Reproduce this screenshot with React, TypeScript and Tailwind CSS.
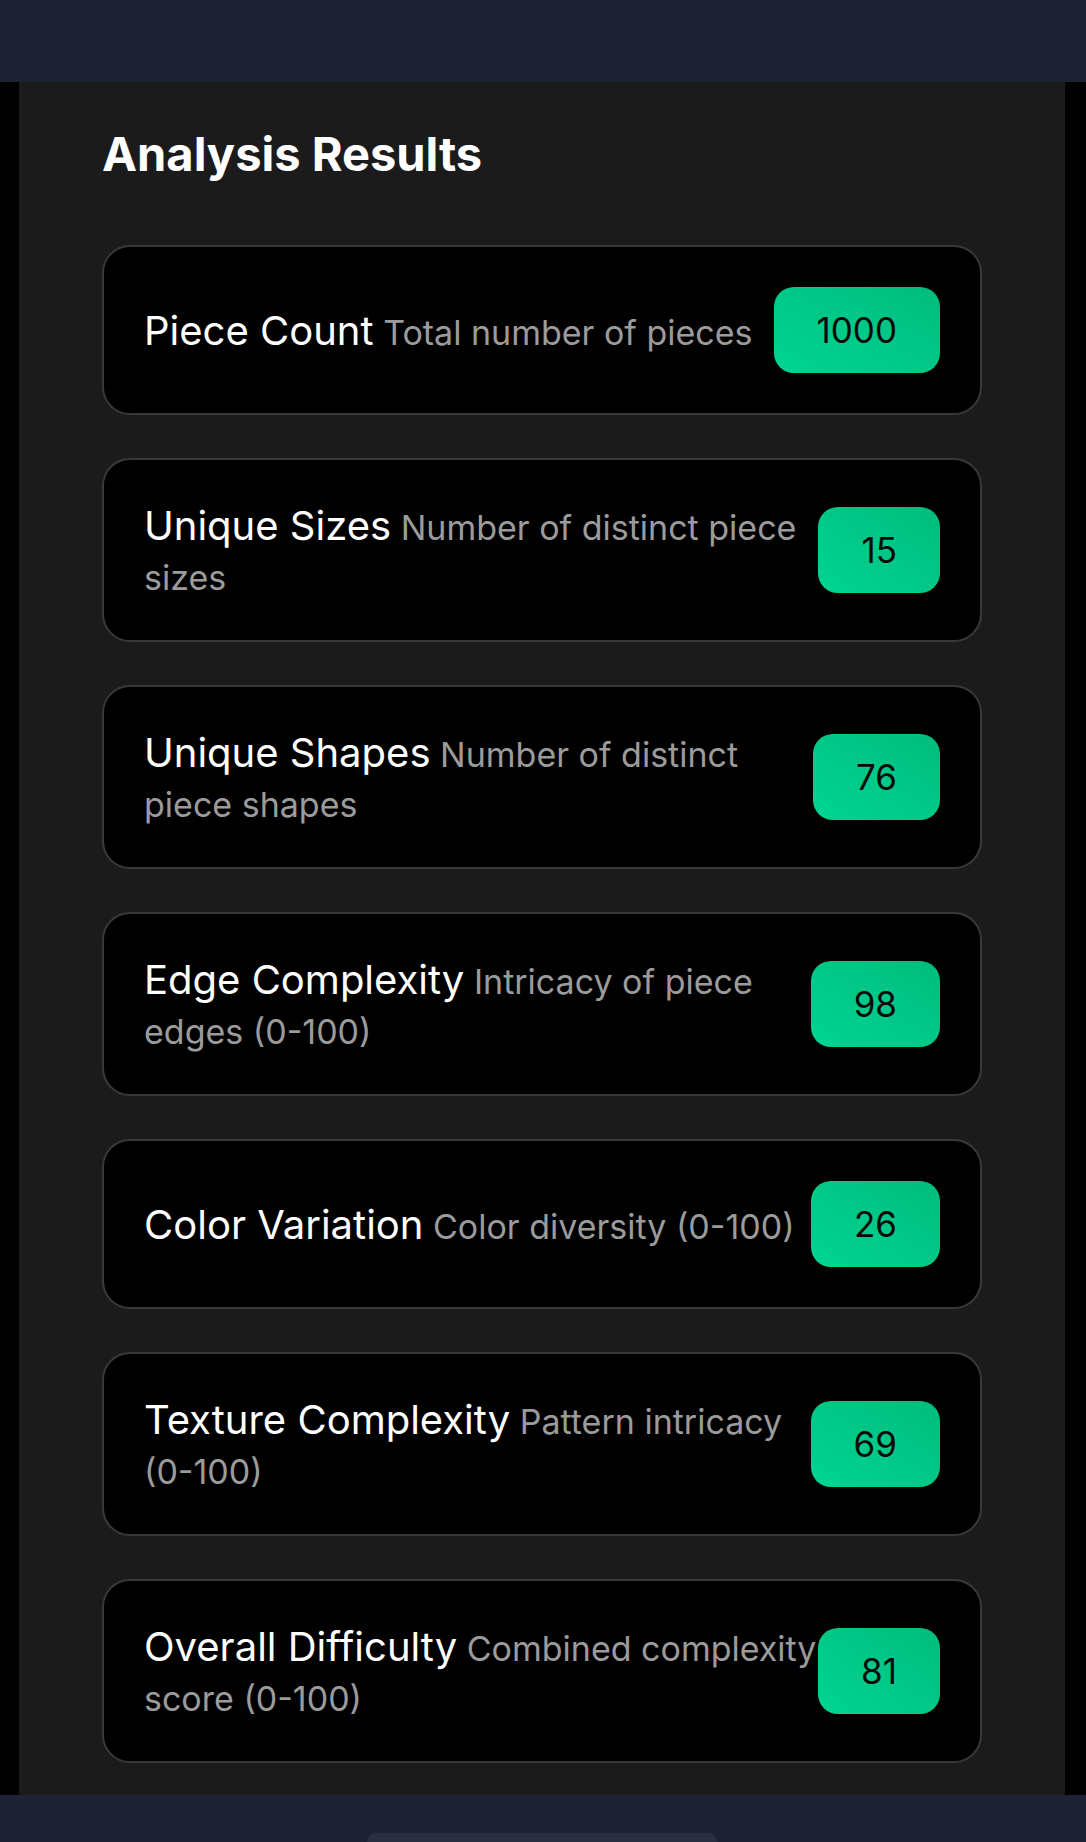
import React from 'react';

type Metric = {
  label: string;
  desc: string;
  value: number;
};

const metrics: Metric[] = [
  { label: 'Piece Count', desc: 'Total number of pieces', value: 1000 },
  { label: 'Unique Sizes', desc: 'Number of distinct piece sizes', value: 15 },
  { label: 'Unique Shapes', desc: 'Number of distinct piece shapes', value: 76 },
  { label: 'Edge Complexity', desc: 'Intricacy of piece edges (0-100)', value: 98 },
  { label: 'Color Variation', desc: 'Color diversity (0-100)', value: 26 },
  { label: 'Texture Complexity', desc: 'Pattern intricacy (0-100)', value: 69 },
  { label: 'Overall Difficulty', desc: 'Combined complexity score (0-100)', value: 81 },
];

const MetricCard = ({ label, desc, value }: Metric) => (
  <div className="flex items-center justify-between rounded-[28px] border-2 border-[#393939] bg-black p-[40px]">
    <p className="-mb-[3px] min-w-0 flex-1 pt-[3px] text-[34px] leading-[50px] text-[#9b9b9b]">
      <span className="text-[40px] leading-[46px] text-white">{label}</span> {desc}
    </p>
    <div className="shrink-0 rounded-[20px] bg-gradient-to-tr from-emerald-400 to-emerald-500 px-[43px] py-[18px] text-[35px] leading-[50px] text-[#0a0a0a]">
      {value}
    </div>
  </div>
);

export default function App() {
  return (
    <div className="w-full bg-black font-['Inter','Liberation_Sans',sans-serif]">
      {/* top app bar */}
      <div className="h-[82px] bg-[#1e2333]" />

      <div className="pl-[19px] pr-[21px]">
        <div className="bg-[#1b1b1b] px-[83px] pt-[37px] pb-[32px]">
          <h2 className="mb-[56px] text-[47px] font-bold leading-[70px] text-white">Analysis Results</h2>
          <div className="flex flex-col gap-[43px]">
            {metrics.map((m) => (
              <MetricCard key={m.label} {...m} />
            ))}
          </div>
        </div>
      </div>

      {/* bottom bar */}
      <div className="flex h-[47px] items-end justify-center bg-[#1e2333] pr-[2px]">
        <div className="h-[9px] w-[350px] rounded-t-[24px] bg-[#2a2f40]" />
      </div>
    </div>
  );
}
